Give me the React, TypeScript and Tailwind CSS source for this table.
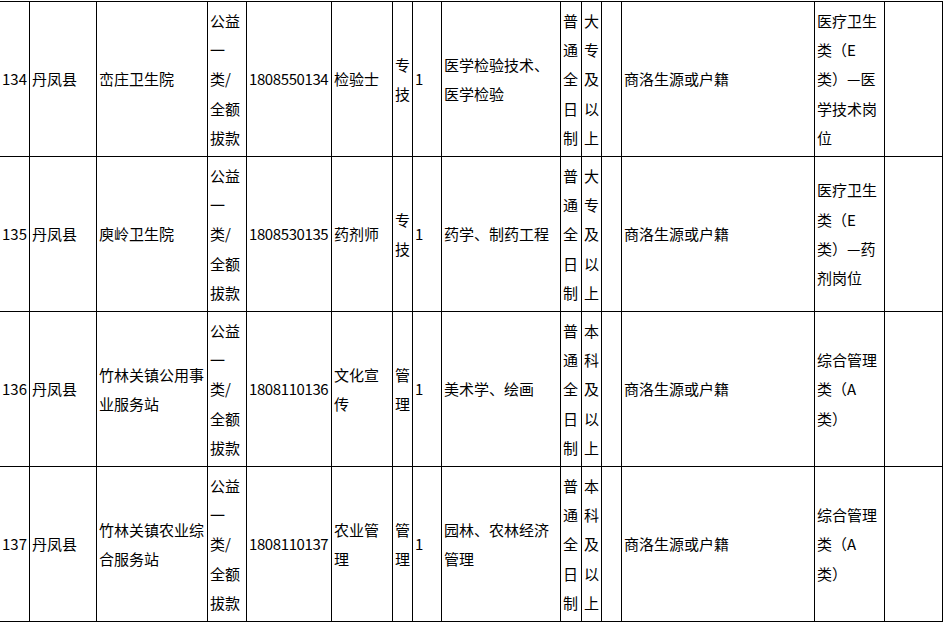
import React from 'react'

type Row = {
    no: string
    county: string
    unit: string[]
    fund: string[]
    code: string
    post: string[]
    kind: string[]
    count: string
    major: string[]
    study: string[]
    degree: string[]
    extra: string[]
    source: string
    category: string[]
}

const fund = ['公益', '一', '类/', '全额', '拔款']
const study = ['普', '通', '全', '日', '制']

const rows: Row[] = [
    {
        no: '134',
        county: '丹凤县',
        unit: ['峦庄卫生院'],
        fund,
        code: '1808550134',
        post: ['检验士'],
        kind: ['专', '技'],
        count: '1',
        major: ['医学检验技术、', '医学检验'],
        study,
        degree: ['大', '专', '及', '以', '上'],
        extra: [],
        source: '商洛生源或户籍',
        category: ['医疗卫生', '类（E', '类）—医', '学技术岗', '位'],
    },
    {
        no: '135',
        county: '丹凤县',
        unit: ['庾岭卫生院'],
        fund,
        code: '1808530135',
        post: ['药剂师'],
        kind: ['专', '技'],
        count: '1',
        major: ['药学、制药工程'],
        study,
        degree: ['大', '专', '及', '以', '上'],
        extra: [],
        source: '商洛生源或户籍',
        category: ['医疗卫生', '类（E', '类）—药', '剂岗位'],
    },
    {
        no: '136',
        county: '丹凤县',
        unit: ['竹林关镇公用事', '业服务站'],
        fund,
        code: '1808110136',
        post: ['文化宣', '传'],
        kind: ['管', '理'],
        count: '1',
        major: ['美术学、绘画'],
        study,
        degree: ['本', '科', '及', '以', '上'],
        extra: [],
        source: '商洛生源或户籍',
        category: ['综合管理', '类（A', '类）'],
    },
    {
        no: '137',
        county: '丹凤县',
        unit: ['竹林关镇农业综', '合服务站'],
        fund,
        code: '1808110137',
        post: ['农业管', '理'],
        kind: ['管', '理'],
        count: '1',
        major: ['园林、农林经济', '管理'],
        study,
        degree: ['本', '科', '及', '以', '上'],
        extra: [],
        source: '商洛生源或户籍',
        category: ['综合管理', '类（A', '类）'],
    },
]

const Cell = ({ lines }: { lines: string[] }) => (
    <div className="flex flex-col justify-center border-r border-b border-black px-[2px] overflow-hidden">
        {lines.map((l, i) => (
            <div key={i} className="whitespace-nowrap">
                {l}
            </div>
        ))}
    </div>
)

const App = () => {
    return (
        <div className="w-[945px] h-[622px] bg-white pt-px text-black text-[15px] leading-[29.3px] font-['Noto_Sans_CJK_SC',sans-serif]">
            <div className="grid w-[943px] grid-cols-[30px_67px_111px_39px_85px_61px_20px_29px_119px_21px_20px_20px_193px_70px_58px] auto-rows-[155px] border-t border-black">
                {rows.map((r) => (
                    <React.Fragment key={r.no}>
                        <Cell lines={[r.no]} />
                        <Cell lines={[r.county]} />
                        <Cell lines={r.unit} />
                        <Cell lines={r.fund} />
                        <div className="flex items-center border-r border-b border-black px-[2px] whitespace-nowrap tracking-[-0.4px]">
                            {r.code}
                        </div>
                        <Cell lines={r.post} />
                        <Cell lines={r.kind} />
                        <Cell lines={[r.count]} />
                        <Cell lines={r.major} />
                        <Cell lines={r.study} />
                        <Cell lines={r.degree} />
                        <Cell lines={r.extra} />
                        <Cell lines={[r.source]} />
                        <Cell lines={r.category} />
                        <Cell lines={[]} />
                    </React.Fragment>
                ))}
            </div>
        </div>
    )
}

export default App
